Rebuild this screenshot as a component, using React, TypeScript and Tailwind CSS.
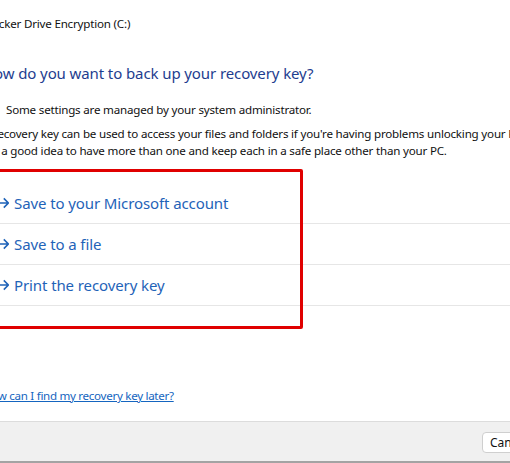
import React from "react";

const font = { fontFamily: '"Noto Sans", "Open Sans", sans-serif' };

function ArrowIcon() {
  return (
    <svg width="10" height="12" viewBox="0 0 10 12" fill="none" aria-hidden="true">
      <path d="M0.5 6H9M4.8 1.4L9.3 6L4.8 10.6" stroke="currentColor" strokeWidth="1.6" />
    </svg>
  );
}

const options = ["Save to your Microsoft account", "Save to a file", "Print the recovery key"];

export default function App() {
  return (
    <div
      className="w-[510px] h-[463px] overflow-hidden bg-white flex flex-col text-[#111]"
      style={font}
    >
      <div className="-ml-[17px] w-[700px] pt-[16px] whitespace-nowrap">
        {/* Window title */}
        <div className="-ml-[11px] text-[11.6px] leading-[16px] tracking-[-0.2px]">
          BitLocker Drive Encryption (C:)
        </div>

        {/* Main instruction */}
        <h1 className="mt-[30px] text-[15px] leading-[22px] text-[#1e3d8f] tracking-[-0.1px]">
          How do you want to back up your recovery key?
        </h1>

        <div className="mt-[18px] flex items-center gap-[7px] text-[11.6px] leading-[16px] tracking-[-0.2px]">
          <span className="w-[16px] h-[16px]" />
          Some settings are managed by your system administrator.
        </div>

        <p className="mt-[7px] text-[11.6px] leading-[17px] tracking-[-0.2px]">
          A recovery key can be used to access your files and folders if you're having problems unlocking your PC.
          <br />
          It's a good idea to have more than one and keep each in a safe place other than your PC.
        </p>

        {/* Options */}
        <div className="relative mt-[24px]">
          {options.map((o) => (
            <div
              key={o}
              className="h-[41px] border-b border-[#e6e6e6] pl-[16px] flex items-center gap-[5px] text-[15px] text-[#1f63b8] tracking-[-0.1px]"
            >
              <ArrowIcon />
              <span>{o}</span>
            </div>
          ))}
          {/* red annotation frame */}
          <div className="absolute left-[7px] top-[-14px] bottom-[-23px] w-[313px] border-[3px] border-[#e00000] rounded-[2px]" />
        </div>

        <a
          href="#"
          className="block mt-[82px] text-[11.6px] leading-[16px] text-[#1565c0] underline tracking-[-0.3px]"
        >
          How can I find my recovery key later?
        </a>
      </div>

      {/* Footer */}
      <div className="mt-auto h-[42px] bg-[#f0f0f0] border-t border-[#dcdcdc] border-b-2 border-b-[#a3a3a3] flex justify-end items-start pt-[10px]">
        <button className="-mr-[45px] w-[73px] h-[21px] bg-white border border-[#cfcfcf] rounded-[4px] text-[12px] leading-[19px] text-[#111] text-left pl-[7px]">
          Cancel
        </button>
      </div>
    </div>
  );
}
